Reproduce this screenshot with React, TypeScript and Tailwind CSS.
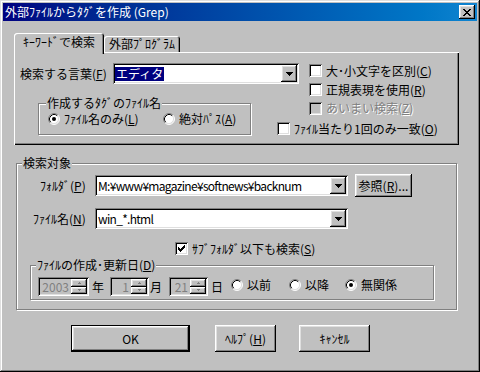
import React from "react";

const RAISED =
  "shadow-[inset_-1px_-1px_0_#000,inset_1px_1px_0_#fff,inset_-2px_-2px_0_#808080,inset_2px_2px_0_#dfdfdf]";
const SUNKEN =
  "shadow-[inset_1px_1px_0_#808080,inset_-1px_-1px_0_#fff,inset_2px_2px_0_#000,inset_-2px_-2px_0_#dfdfdf]";

function U({ children }: { children: React.ReactNode }) {
  return <span className="underline underline-offset-[1px]">{children}</span>;
}

function DownArrow() {
  return (
    <svg width="7" height="4" viewBox="0 0 7 4">
      <path d="M0 0h7v1h-7zM1 1h5v1h-5zM2 2h3v1h-3zM3 3h1v1h-1z" fill="#000" />
    </svg>
  );
}

function Combo({
  className = "",
  text,
  selected = false,
}: {
  className?: string;
  text: string;
  selected?: boolean;
}) {
  return (
    <div className={`flex h-[21px] bg-white p-[2px] ${SUNKEN} ${className}`}>
      <div className="flex flex-1 items-center overflow-hidden whitespace-nowrap">
        {selected ? (
          <span className="bg-[#000080] px-[1px] leading-[14px] text-white">{text}</span>
        ) : (
          <span className="pl-[1px] leading-[14px] tracking-[-0.7px]">{text}</span>
        )}
      </div>
      <div className={`flex w-[16px] items-center justify-center bg-[#c0c0c0] ${RAISED}`}>
        <DownArrow />
      </div>
    </div>
  );
}

function Checkbox({
  checked = false,
  disabled = false,
  className = "",
  children,
}: {
  checked?: boolean;
  disabled?: boolean;
  className?: string;
  children: React.ReactNode;
}) {
  return (
    <div className={`flex items-center gap-[4px] whitespace-nowrap ${className}`}>
      <div
        className={`flex h-[13px] w-[13px] shrink-0 items-center justify-center ${
          disabled ? "bg-[#c0c0c0]" : "bg-white"
        } ${SUNKEN}`}
      >
        {checked && (
          <svg width="7" height="7" viewBox="0 0 7 7">
            <path
              d="M0 2h1v3h-1zM1 3h1v3h-1zM2 4h1v3h-1zM3 3h1v3h-1zM4 2h1v3h-1zM5 1h1v3h-1zM6 0h1v3h-1z"
              fill="#000"
            />
          </svg>
        )}
      </div>
      <span className={disabled ? "text-[#808080] [text-shadow:1px_1px_0_#fff]" : ""}>
        {children}
      </span>
    </div>
  );
}

function RadioIcon({ checked }: { checked: boolean }) {
  return (
    <svg width="12" height="12" viewBox="0 0 12 12" className="shrink-0">
      <circle cx="6" cy="6" r="5" fill="#fff" />
      <path d="M2.11 9.89A5.5 5.5 0 0 1 9.89 2.11" stroke="#808080" fill="none" />
      <path d="M9.89 2.11A5.5 5.5 0 0 1 2.11 9.89" stroke="#fff" fill="none" />
      <path d="M2.82 9.18A4.5 4.5 0 0 1 9.18 2.82" stroke="#000" fill="none" />
      <path d="M9.18 2.82A4.5 4.5 0 0 1 2.82 9.18" stroke="#dfdfdf" fill="none" />
      {checked && <circle cx="6" cy="6" r="2" fill="#000" />}
    </svg>
  );
}

function Radio({
  checked = false,
  className = "",
  children,
}: {
  checked?: boolean;
  className?: string;
  children: React.ReactNode;
}) {
  return (
    <div className={`flex items-center gap-[4px] whitespace-nowrap ${className}`}>
      <RadioIcon checked={checked} />
      <span>{children}</span>
    </div>
  );
}

function Group({
  label,
  className = "",
  legendClass = "",
  children,
}: {
  label: React.ReactNode;
  className?: string;
  legendClass?: string;
  children: React.ReactNode;
}) {
  return (
    <div
      className={`relative border border-[#808080] shadow-[inset_1px_1px_0_#fff,1px_1px_0_#fff] ${className}`}
    >
      <span
        className={`absolute top-[-8px] whitespace-nowrap bg-[#c0c0c0] px-[1px] leading-[14px] ${legendClass}`}
      >
        {label}
      </span>
      {children}
    </div>
  );
}

function Button({
  className = "",
  isDefault = false,
  children,
}: {
  className?: string;
  isDefault?: boolean;
  children: React.ReactNode;
}) {
  return (
    <div
      className={`flex items-center justify-center whitespace-nowrap bg-[#c0c0c0] ${
        isDefault ? "border border-black" : ""
      } ${RAISED} ${className}`}
    >
      {children}
    </div>
  );
}

function Spin({ value, className = "" }: { value: string; className?: string }) {
  return (
    <div className={`flex h-[19px] bg-[#c0c0c0] p-[2px] ${SUNKEN} ${className}`}>
      <div className="flex flex-1 items-center justify-end pr-[2px] leading-[14px] text-[#808080]">
        {value}
      </div>
      <div className="flex w-[16px] flex-col">
        <div className={`flex flex-1 items-center justify-center ${RAISED}`}>
          <svg width="3" height="2" viewBox="0 0 3 2">
            <path d="M1 0h1v1h-1zM0 1h3v1h-3z" fill="#808080" />
          </svg>
        </div>
        <div className={`flex flex-1 items-center justify-center ${RAISED}`}>
          <svg width="3" height="2" viewBox="0 0 3 2">
            <path d="M0 0h3v1h-3zM1 1h1v1h-1z" fill="#808080" />
          </svg>
        </div>
      </div>
    </div>
  );
}

export default function App() {
  return (
    <div
      className="flex h-[372px] w-[480px] flex-col bg-[#c0c0c0] p-[3px] font-['Noto_Sans_CJK_JP',sans-serif] text-[12px] leading-[14px] text-black shadow-[inset_-1px_-1px_0_#000,inset_1px_1px_0_#dfdfdf,inset_-2px_-2px_0_#808080,inset_2px_2px_0_#fff]"
    >
      {/* Title bar */}
      <div className="flex h-[18px] items-center bg-linear-to-r from-[#000080] to-[#1084d0] pl-[2px]">
        <span className="whitespace-nowrap text-white">外部ﾌｧｲﾙからﾀｸﾞを作成 (Grep)</span>
        <div
          className={`ml-auto mr-[2px] flex h-[14px] w-[16px] items-center justify-center bg-[#c0c0c0] ${RAISED}`}
        >
          <svg width="8" height="7" viewBox="0 0 8 7">
            <path
              d="M0 0h2v1h-2zM6 0h2v1h-2zM1 1h2v1h-2zM5 1h2v1h-2zM2 2h4v1h-4zM3 3h2v1h-2zM2 4h4v1h-4zM1 5h2v1h-2zM5 5h2v1h-2zM0 6h2v1h-2zM6 6h2v1h-2z"
              fill="#000"
            />
          </svg>
        </div>
      </div>

      {/* Tabs */}
      <div className="ml-[11px] mt-[12px] flex h-[19px] items-end">
        <div className="relative z-10 -mb-[2px] flex h-[21px] w-[90px] justify-center rounded-t-[3px] bg-[#c0c0c0] pt-[2px] whitespace-nowrap shadow-[inset_1px_1px_0_#fff,inset_-1px_0_0_#000,inset_-2px_0_0_#808080]">
          ｷｰﾜｰﾄﾞで検索
        </div>
        <div className="flex h-[16px] w-[76px] items-center justify-center rounded-t-[3px] whitespace-nowrap shadow-[inset_1px_1px_0_#fff,inset_-1px_0_0_#000,inset_-2px_0_0_#808080]">
          外部ﾌﾟﾛｸﾞﾗﾑ
        </div>
      </div>

      {/* Tab panel */}
      <div className="ml-[11px] flex h-[93px] w-[445px] flex-col shadow-[inset_1px_1px_0_#fff,inset_-1px_-1px_0_#000,inset_-2px_-2px_0_#808080]">
        <div className="flex h-[47px] items-start">
          <div className="ml-[6px] mt-[11px] flex items-center">
            <div className="w-[93px] whitespace-nowrap">
              検索する言葉(<U>F</U>)
            </div>
            <Combo className="w-[186px]" text="エディタ" selected />
          </div>
          <div className="ml-[10px] mt-[9px] flex flex-col">
            <Checkbox className="h-[19px]">
              大･小文字を区別(<U>C</U>)
            </Checkbox>
            <Checkbox className="h-[19px]">
              正規表現を使用(<U>R</U>)
            </Checkbox>
          </div>
        </div>
        <div className="flex items-start">
          <Group
            label="作成するﾀｸﾞのﾌｧｲﾙ名"
            className="ml-[24px] mt-[4px] flex h-[32px] w-[213px] items-center pl-[9px]"
            legendClass="left-[7px]"
          >
            <Radio checked className="w-[115px]">
              ﾌｧｲﾙ名のみ(<U>L</U>)
            </Radio>
            <Radio>
              絶対ﾊﾟｽ(<U>A</U>)
            </Radio>
          </Group>
          <div className="ml-[26px] flex flex-col">
            <Checkbox disabled className="h-[18px] pl-[32px]">
              あいまい検索(<U>Z</U>)
            </Checkbox>
            <Checkbox className="mt-[2px] h-[19px]">
              ﾌｧｲﾙ当たり1回のみ一致(<U>O</U>)
            </Checkbox>
          </div>
        </div>
      </div>

      {/* 検索対象 */}
      <Group
        label="検索対象"
        className="ml-[13px] mt-[18px] flex h-[147px] w-[441px] flex-col"
        legendClass="left-[5px]"
      >
        <div className="mt-[10px] flex h-[23px] items-center">
          <div className="w-[78px] whitespace-nowrap pl-[23px]">
            ﾌｫﾙﾀﾞ(<U>P</U>)
          </div>
          <Combo className="w-[253px]" text="M:¥www¥magazine¥softnews¥backnum" />
          <Button className="ml-[7px] h-[23px] w-[57px]">
            参照(<U>R</U>)...
          </Button>
        </div>
        <div className="mt-[11px] flex h-[21px] items-center">
          <div className="w-[78px] whitespace-nowrap pl-[16px]">
            ﾌｧｲﾙ名(<U>N</U>)
          </div>
          <Combo className="w-[253px]" text="win_*.html" />
        </div>
        <Checkbox checked className="mt-[10px] h-[19px] pl-[158px]">
          ｻﾌﾞﾌｫﾙﾀﾞ以下も検索(<U>S</U>)
        </Checkbox>
        <Group
          label={
            <>
              ﾌｧｲﾙの作成･更新日(<U>D</U>)
            </>
          }
          className="ml-[13px] mt-[7px] h-[35px] w-[404px]"
          legendClass="left-[5px]"
        >
          <div className="ml-[7px] mt-[11px] flex h-[19px] items-center">
            <Spin className="w-[51px]" value="2003" />
            <span className="w-[21px] pl-[3px]">年</span>
            <Spin className="w-[39px]" value="1" />
            <span className="w-[20px] pl-[1px]">月</span>
            <Spin className="w-[39px]" value="21" />
            <span className="w-[23px] pl-[3px]">日</span>
            <Radio className="mb-[4px] w-[58px]">以前</Radio>
            <Radio className="mb-[4px] w-[56px]">以降</Radio>
            <Radio checked className="mb-[4px]">
              無関係
            </Radio>
          </div>
        </Group>
      </Group>

      {/* Buttons */}
      <div className="mt-[15px] flex">
        <Button isDefault className="ml-[68px] h-[27px] w-[119px]">
          OK
        </Button>
        <Button className="ml-[25px] h-[27px] w-[61px]">
          ﾍﾙﾌﾟ(<U>H</U>)
        </Button>
        <Button className="ml-[23px] h-[27px] w-[71px]">ｷｬﾝｾﾙ</Button>
      </div>
    </div>
  );
}
